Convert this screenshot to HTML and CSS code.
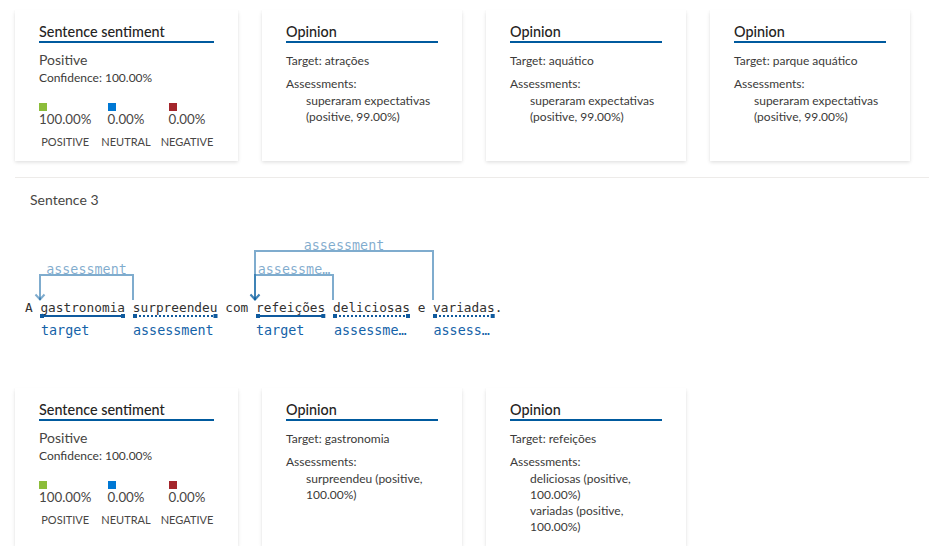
FILE: index.html
```html
<!DOCTYPE html>
<html lang="pt">
<head>
<meta charset="utf-8">
<title>Sentence sentiment</title>
<link rel="stylesheet" href="styles.css">
</head>
<body>
<div class="page">
  <div class="cards">
    <div class="card sentiment">
      <div class="card-title">Sentence sentiment</div>
      <div class="sent-main">Positive</div>
      <div class="sent-conf">Confidence: 100.00%</div>
      <div class="scores">
        <div class="score">
          <div class="score-top"><span class="sq sq-pos"></span><span class="pct">100.00%</span></div>
          <div class="score-label">POSITIVE</div>
        </div>
        <div class="score">
          <div class="score-top"><span class="sq sq-neu"></span><span class="pct">0.00%</span></div>
          <div class="score-label">NEUTRAL</div>
        </div>
        <div class="score">
          <div class="score-top"><span class="sq sq-neg"></span><span class="pct">0.00%</span></div>
          <div class="score-label">NEGATIVE</div>
        </div>
      </div>
    </div>
    <div class="card opinion">
      <div class="card-title">Opinion</div>
      <div class="op-target">Target: atrações</div>
      <div class="op-head">Assessments:</div>
      <div class="op-list"><div>superaram expectativas (positive, 99.00%)</div></div>
    </div>
    <div class="card opinion">
      <div class="card-title">Opinion</div>
      <div class="op-target">Target: aquático</div>
      <div class="op-head">Assessments:</div>
      <div class="op-list"><div>superaram expectativas (positive, 99.00%)</div></div>
    </div>
    <div class="card opinion">
      <div class="card-title">Opinion</div>
      <div class="op-target">Target: parque aquático</div>
      <div class="op-head">Assessments:</div>
      <div class="op-list"><div>superaram expectativas (positive, 99.00%)</div></div>
    </div>
  </div>

  <div class="divider"></div>

  <div class="sentence-title">Sentence 3</div>

  <svg class="diagram" width="520" height="115" viewBox="0 230 520 115" xmlns="http://www.w3.org/2000/svg">
    <g class="arcs">
      <path d="M133 300V275H40V300"/>
      <path d="M35.5 294.5L40 299.5L44.5 294.5"/>
      <path d="M433 300V251H255V300"/>
      <path d="M250.5 294.5L255 299.5L259.5 294.5"/>
      <path d="M333 300V275H255V300"/>
      <path d="M250.5 294.5L255 299.5L259.5 294.5"/>
    </g>
    <g class="arc-labels">
      <text x="86.5" y="273.5">assessment</text>
      <text x="344" y="249.5">assessment</text>
      <text x="294" y="273.5">assessme…</text>
    </g>
    <g class="tokens">
      <text x="25" y="312">A</text>
      <text x="40.4" y="312">gastronomia</text>
      <text x="132.8" y="312">surpreendeu</text>
      <text x="225.2" y="312">com</text>
      <text x="256" y="312">refeições</text>
      <text x="333" y="312">deliciosas</text>
      <text x="417.7" y="312">e</text>
      <text x="433.1" y="312">variadas.</text>
    </g>
    <g class="spans">
      <line class="solid" x1="41" y1="316" x2="124" y2="316"/>
      <rect x="40" y="314" width="4" height="4"/><rect x="121" y="314" width="4" height="4"/>
      <line class="dotted" x1="135" y1="316" x2="214" y2="316"/>
      <rect x="133" y="314" width="4" height="4"/><rect x="213.5" y="314" width="4" height="4"/>
      <line class="solid" x1="257" y1="316" x2="324" y2="316"/>
      <rect x="256" y="314" width="4" height="4"/><rect x="321.3" y="314" width="4" height="4"/>
      <line class="dotted" x1="335" y1="316" x2="406" y2="316"/>
      <rect x="333" y="314" width="4" height="4"/><rect x="406" y="314" width="4" height="4"/>
      <line class="dotted" x1="435" y1="316" x2="491" y2="316"/>
      <rect x="433" y="314" width="4" height="4"/><rect x="490.7" y="314" width="4" height="4"/>
    </g>
    <g class="span-labels">
      <text x="41" y="334.5">target</text>
      <text x="133" y="334.5">assessment</text>
      <text x="256" y="334.5">target</text>
      <text x="334" y="334.5">assessme…</text>
      <text x="433.5" y="334.5">assess…</text>
    </g>
  </svg>

  <div class="cards cards-bottom">
    <div class="card sentiment">
      <div class="card-title">Sentence sentiment</div>
      <div class="sent-main">Positive</div>
      <div class="sent-conf">Confidence: 100.00%</div>
      <div class="scores">
        <div class="score">
          <div class="score-top"><span class="sq sq-pos"></span><span class="pct">100.00%</span></div>
          <div class="score-label">POSITIVE</div>
        </div>
        <div class="score">
          <div class="score-top"><span class="sq sq-neu"></span><span class="pct">0.00%</span></div>
          <div class="score-label">NEUTRAL</div>
        </div>
        <div class="score">
          <div class="score-top"><span class="sq sq-neg"></span><span class="pct">0.00%</span></div>
          <div class="score-label">NEGATIVE</div>
        </div>
      </div>
    </div>
    <div class="card opinion">
      <div class="card-title">Opinion</div>
      <div class="op-target">Target: gastronomia</div>
      <div class="op-head">Assessments:</div>
      <div class="op-list"><div>surpreendeu (positive, 100.00%)</div></div>
    </div>
    <div class="card opinion">
      <div class="card-title">Opinion</div>
      <div class="op-target">Target: refeições</div>
      <div class="op-head">Assessments:</div>
      <div class="op-list">
        <div>deliciosas (positive, 100.00%)</div>
        <div>variadas (positive, 100.00%)</div>
      </div>
    </div>
  </div>
</div>
</body>
</html>
```

FILE: styles.css
```css
html, body {
  margin: 0;
  padding: 0;
  background: #ffffff;
}

body {
  font-family: Lato, "Segoe UI", "Noto Sans", sans-serif;
  color: #323130;
}

.page {
  padding-top: 10px;
}

.cards {
  display: flex;
  gap: 24px;
  padding-left: 15px;
  align-items: stretch;
}

.cards-bottom {
  margin-top: 43px;
}

.card {
  box-sizing: border-box;
  width: 200px;
  padding: 12px 24px 11px;
  background: #ffffff;
  box-shadow: 0 1.6px 3.6px rgba(0, 0, 0, 0.13), 0 0.3px 0.9px rgba(0, 0, 0, 0.11);
}

.card.sentiment {
  width: 223px;
}

.card-title {
  font-size: 14.4px;
  font-weight: 500;
  line-height: 19px;
  border-bottom: 2px solid #005a9e;
  color: #252423;
}

.sent-main {
  margin-top: 7px;
  font-size: 14px;
  line-height: 20px;
  color: #484644;
}

.sent-conf {
  font-size: 12px;
  line-height: 16px;
  color: #3b3a39;
}

.scores {
  display: flex;
  gap: 10px;
  margin-top: 17px;
}

.score {
  display: flex;
  flex-direction: column;
  align-items: center;
}

.score-top {
  display: flex;
  flex-direction: column;
  align-items: flex-start;
}

.sq {
  display: block;
  width: 8px;
  height: 8px;
}

.sq-pos { background: #8cbd3a; }
.sq-neu { background: #0078d4; }
.sq-neg { background: #a4262c; }

.pct {
  font-size: 13.3px;
  line-height: 16px;
  color: #484644;
}

.score-label {
  margin-top: 7px;
  font-size: 11px;
  line-height: 16px;
  color: #484644;
}

.op-target {
  margin-top: 10px;
  font-size: 12px;
  line-height: 16px;
  color: #3b3a39;
}

.op-head {
  margin-top: 7px;
  font-size: 12px;
  line-height: 16px;
  color: #3b3a39;
}

.op-list {
  margin-top: 1px;
  padding-left: 20px;
  font-size: 12px;
  line-height: 16px;
  color: #3b3a39;
}

.divider {
  margin: 16px 0 0 15px;
  height: 1px;
  background: #edebe9;
}

.sentence-title {
  margin-top: 13px;
  padding-left: 30px;
  font-size: 14px;
  line-height: 18px;
  color: #484644;
}

.diagram {
  display: block;
  margin-top: 21px;
}

.diagram text {
  font-family: "DejaVu Sans Mono", "Liberation Mono", monospace;
}

.arcs path {
  fill: none;
  stroke: rgba(0, 90, 158, 0.5);
  stroke-width: 2;
}

.arc-labels text {
  font-size: 13.4px;
  fill: rgba(0, 90, 158, 0.5);
  text-anchor: middle;
}

.tokens text {
  font-size: 12.79px;
  fill: #323130;
}

.spans line {
  stroke: #0f5a9e;
  stroke-width: 2;
}

.spans line.dotted {
  stroke-dasharray: 2 2;
}

.spans rect {
  fill: #0f5a9e;
}

.span-labels text {
  font-size: 13.4px;
  fill: #1462a8;
}
```
